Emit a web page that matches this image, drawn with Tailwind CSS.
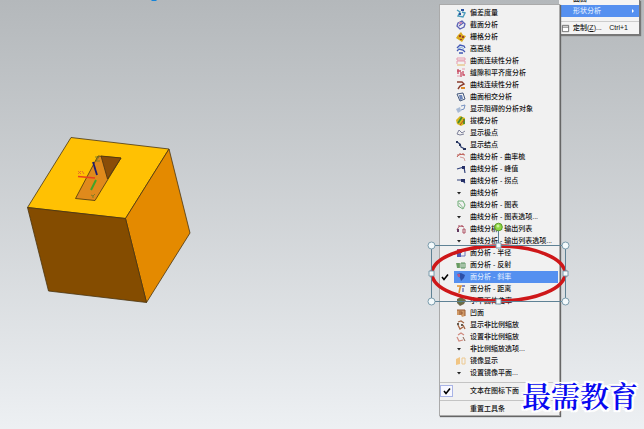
<!DOCTYPE html>
<html lang="zh-CN">
<head>
<meta charset="utf-8">
<title>形状分析</title>
<script src="https://cdn.jsdelivr.net/npm/@tailwindcss/browser@4"></script>
</head>
<body class="relative min-h-screen overflow-hidden bg-linear-to-b from-[#b4b8bb] to-[#edf0f3] font-['Liberation_Sans','Noto_Sans_CJK_SC',sans-serif] text-[7px] leading-3 font-medium text-[#111]">

<!-- Solid model -->
<svg class="absolute left-[10px] top-[120px] h-[190px] w-[200px]" viewBox="0 0 200 190" role="img" aria-label="立方体模型">
  <g stroke="#4a3510" stroke-width=".8" stroke-linejoin="round">
    <path d="M61 17.500 159 29 115.500 98.500 17.500 87.500Z" fill="#ffc103"/>
    <path d="M159 29 180 113 136.500 182.500 115.500 98.500Z" fill="#e48a00"/>
    <path d="M17.500 87.500 115.500 98.500 136.500 182.500 38.500 171Z" fill="#844c00"/>
    <path d="M88 36 111 38 85 80.500 65.500 78.500Z" fill="#e08a1c"/>
    <path d="M91 36 111 38 97.500 59Z" fill="#8a4d08"/>
  </g>
  <path d="M68 56.500 85 58" stroke="#e8401c" stroke-width="1.500"/>
  <path d="M83 42 87 55" stroke="#1c1c70" stroke-width="1.800"/>
  <path d="M86 60 81 70" stroke="#3fa52a" stroke-width="2"/>
  <path d="M68 51 71 54M71 51 68 54M72 51l2 3" stroke="#e06030" stroke-width=".8" fill="none"/>
  <path d="M85 37h4l-3 4h4M81 75l2 1 2-2m-2 2v2" stroke="#6b7a28" stroke-width=".8" fill="none"/>
</svg>

<svg class="absolute left-[151px] top-0 h-[1px] w-[6px]" viewBox="0 0 6 1" aria-hidden="true"><path d="M0 0h6L5 1H1Z" fill="#1684d8"/></svg>

<!-- Parent menu -->
<nav class="absolute right-1 top-0 w-[81px] border-r border-b border-[#777] bg-[#f4f4f4] shadow-[1px_1px_1px_#777]">
  <div class="flex h-[5px] items-end overflow-hidden pl-[14px]"><span>曲面</span></div>
  <button class="flex h-3 w-full items-center justify-between bg-[#5590f0] pr-1 pl-[14px] text-[#d8e7ff]">形状分析<svg class="h-1 w-1" viewBox="0 0 4 4"><path d="M1 0v4l2-2Z" fill="#fff"/></svg></button>
  <hr class="mt-1 border-[#ccc]">
  <button class="flex h-3 w-full items-center pr-[11px] pl-[2px]"><svg class="mr-[3px] h-[9px] w-[9px]" viewBox="0 0 10 10"><path d="M1.500 1.500h7v7h-7ZM1.500 3.500h7" fill="#fff" stroke="#666"/></svg><span>定制(<u>Z</u>)...</span><span class="ml-auto">Ctrl+1</span></button>
</nav>

<!-- Shape analysis submenu -->
<nav class="absolute left-[439px] top-[4px] w-[121px] border border-[#aaa] bg-[#f1f1f1] pt-[2px] shadow-[1px_1px_1px_#666]">
  <ul id="items"></ul>
  <hr class="mt-[3px] mb-[2px] border-[#c4c4c4]">
  <button role="menuitemcheckbox" aria-checked="true" class="flex h-3 w-full items-center"><span class="flex h-3 w-[13px] items-center justify-center border border-[#a9b4e6] bg-[#f8f8ff]"><svg class="h-2 w-2" viewBox="0 0 8 8"><path d="M1 4 3 6.500 7 1.500" fill="none" stroke="#000" stroke-width="1.600"/></svg></span><span class="ml-[17px]">文本在图标下面</span></button>
  <hr class="mt-[3px] mb-[2px] border-[#c4c4c4]">
  <button class="flex h-3 w-full items-center pl-[30px]">重置工具条</button>
</nav>

<!-- Annotation ellipse with its selection frame -->
<svg class="pointer-events-none absolute left-[424px] top-[215px] h-[95px] w-[150px]" viewBox="0 0 150 95" aria-hidden="true">
  <ellipse cx="74.500" cy="58.500" rx="66.500" ry="27.500" fill="none" stroke="#ce1719" stroke-width="3.500"/>
  <path d="M7.500 30.500h134v56H7.500ZM74.500 15v15" fill="none" stroke="#5f8295"/>
  <g fill="#f4fafc" stroke="#6f93a5" stroke-width=".9">
    <circle cx="7.500" cy="30.500" r="3.500"/><circle cx="141.500" cy="30.500" r="3.500"/>
    <circle cx="7.500" cy="86.500" r="3.500"/><circle cx="141.500" cy="86.500" r="3.500"/>
    <path d="M72 28h5v5h-5ZM72 84h5v5h-5ZM5 56h5v5H5ZM139 56h5v5h-5Z"/>
  </g>
  <circle cx="74.500" cy="12" r="3.800" fill="#8ed843" stroke="#5c9c2c"/>
  <circle cx="74" cy="11" r="1.500" fill="#c8f29a"/>
</svg>

<p class="absolute right-[6px] bottom-[17px] font-['Noto_Serif_CJK_SC','Noto_Sans_CJK_SC',sans-serif] text-[29px] leading-8 font-semibold text-[#0808f0] [text-shadow:2px_0_#fff,-2px_0_#fff,0_2px_#fff,0_-2px_#fff,2px_2px_#fff,-2px_-2px_#fff,2px_-2px_#fff,-2px_2px_#fff,0_0_4px_#fff]">最需教育</p>

<script>
const stroke = (color, d, width = 1) => `<path d="${d}" fill="none" stroke="${color}" stroke-width="${width}"/>`;
const fill = (color, d) => `<path d="${d}" fill="${color}"/>`;
const arrow = fill('#222', 'M1 4h4L3 6.500Z');
const rows = [
  ['偏差度量', stroke('#4a9aba', 'M1 2 4 4 2 8 7 9 9 5 6 4', 1.4) + fill('#294f9c', 'M5 1h3v2H5ZM3 5h2v2H3Z')],
  ['截面分析', stroke('#5b62b5', 'M2 3 6 1 9 4 8 7 4 9 1 6ZM3 6 7 3', 1.3) + fill('#c58ab5', 'M3 2h3v2H3Z')],
  ['栅格分析', fill('#d9a81c', 'M5 0 7 3l3 1-2 3-2 3-3-2-3-2 2-3Z') + fill('#98422c', 'M3 3h2v2H3ZM6 4h2v2H6ZM4 7h2v1H4Z')],
  ['高高线', stroke('#4258b5', 'M1 4 4 1 8 2 9 4M1 7 3 5 7 6 9 8M3 9h4', 1.3) + stroke('#8fb8dc', 'M2 5 5 3 8 5')],
  ['曲面连续性分析', stroke('#e69bad', 'M1 2h8v2H1ZM1 8V5h8v3') + stroke('#e3b562', 'M1 9h8')],
  ['缝隙和平齐度分析', stroke('#c94b63', 'M2 1v5M1 3h4M5 4v5M7 3v4h2', 1.3) + stroke('#e69bad', 'M1 8h3M6 1h3')],
  ['曲线连续性分析', stroke('#8a3c2c', 'M1 2h5l2 2-4 2-2 3', 1.4) + fill('#dc8a2c', 'M5 7h4v2H5Z')],
  ['曲面相交分析', stroke('#44587c', 'M1 2 7 1l2 6-5 2Z') + fill('#6a84b8', 'M3 3h3l1 4-3 1Z')],
  ['显示阻碍的分析对象', fill('#a8bad5', 'M0 5 4 3l1 4-3 2Z') + stroke('#7590c0', 'M5 2 9 1 8 5 5 6')],
  ['拔模分析', fill('#d8b51c', 'M0 4 4 0l5 2v6L5 10 1 8Z') + stroke('#428b32', 'M2 7 6 1M8 3v5', 1.7) + stroke('#ba4a24', 'M4 9 8 4')],
  ['显示极点', stroke('#7d8099', 'M1 6 3 2 6 5 9 3M1 6l3 1 4-1')],
  ['显示结点', stroke('#344475', 'M1 2 4 4 5 7 9 9', 1.2) + fill('#27355e', 'M0 1h2v2H0ZM3 4h2v2H3ZM7 8h3v2H7Z')],
  ['曲线分析 - 曲率梳', stroke('#bd5d55', 'M1 5Q3 1 9 3M2 4V2M4 3V1M7 3V1') + stroke('#d49a98', 'M4 5l4 1 1 3')],
  ['曲线分析 - 峰值', stroke('#31417a', 'M1 5 8 3 9 9', 1.2) + fill('#263068', 'M6 2h3v3H6Z')],
  ['曲线分析 - 拐点', stroke('#31417a', 'M1 4h5l3 3', 1.2) + fill('#263068', 'M5 3h4v3H5Z')],
  ['曲线分析', arrow],
  ['曲线分析 - 图表', stroke('#6fae77', 'M2 1h5l2 4-2 4-5-3Z') + stroke('#94bd98', 'M3 3 8 9')],
  ['曲线分析 - 图表选项...', arrow],
  ['曲线分析 - 输出列表', stroke('#ad4f60', 'M1 6Q3 0 8 3M3 3V1M6 3V1M7 5v4h2V5Z') + fill('#623a60', 'M1 5h2v3H1Z')],
  ['曲线分析 - 输出列表选项...', arrow],
  ['面分析 - 半径', fill('#b0517c', 'M1 1h5v4H1Z') + fill('#4d58b5', 'M1 5h4v4H1Z') + stroke('#6d75bb', 'M6 2h3v6H5')],
  ['面分析 - 反射', fill('#7aa66c', 'M0 3h4v5H1Z') + stroke('#57905c', 'M5 3h4v5H5ZM2 3v5M7 3v5')],
  ['面分析 - 斜率', fill('#2c4fa8', 'M1 2 5 1l4 2-1 3-3 3-1-3Z') + fill('#b55689', 'M1 2h3v3H2Z')],
  ['面分析 - 距离', stroke('#e0922c', 'M1 2h4l-1 2-1 5', 1.6) + stroke('#5c6bb5', 'M6 2h3M7 4v4', 1.3)],
  ['小平面体曲率', fill('#6f6948', 'M1 3 5 1l5 3-2 4-4 2-3-3Z') + fill('#597c48', 'M3 4h3v3H3Z')],
  ['凹面', fill('#d09a67', 'M1 2h8v6L6 9 5 7H1Z') + stroke('#985a34', 'M1 2h8v6M3 4h3v2H3')],
  ['显示非比例缩放', stroke('#a46442', 'M2 2 5 1 8 3M2 5l2 4 3-2M7 5l2 4', 1.3) + fill('#655c50', 'M1 3h2v2H1ZM5 4h2v2H5Z')],
  ['设置非比例缩放', stroke('#cf897d', 'M2 3 5 1 8 3M1 5l2 4 4-1', 1.2) + stroke('#8a6250', 'M7 5l2 4')],
  ['非比例缩放选项...', arrow],
  ['镜像显示', fill('#f1c583', 'M0 3 4 1v7L0 9Z') + stroke('#edc991', 'M6 2h3v6H6Z')],
  ['设置镜像平面...', arrow],
];
const check = '<svg class="h-2 w-2" viewBox="0 0 8 8"><path d="M1 4 3 6.500 7 1.500" fill="none" stroke="#000" stroke-width="1.600"/></svg>';
document.getElementById('items').innerHTML = rows.map(([label, icon]) => {
  const on = label === '面分析 - 斜率';
  return `<li><button class="flex h-3 w-full items-center pr-[1px] text-left whitespace-nowrap">
    <span class="flex h-3 w-[14px] shrink-0 items-center pl-[1px]">${on ? check : ''}</span>
    <span class="${on ? 'flex h-3 grow items-center bg-[#5590f0] pl-[2px] text-[#d8e7ff]' : 'flex h-3 grow items-center pl-[2px]'}">
      <svg class="mr-1 h-[10px] w-[10px] shrink-0" viewBox="0 0 10 10" aria-hidden="true">${icon}</svg>${label}</span></button></li>`;
}).join('');
</script>
</body>
</html>
